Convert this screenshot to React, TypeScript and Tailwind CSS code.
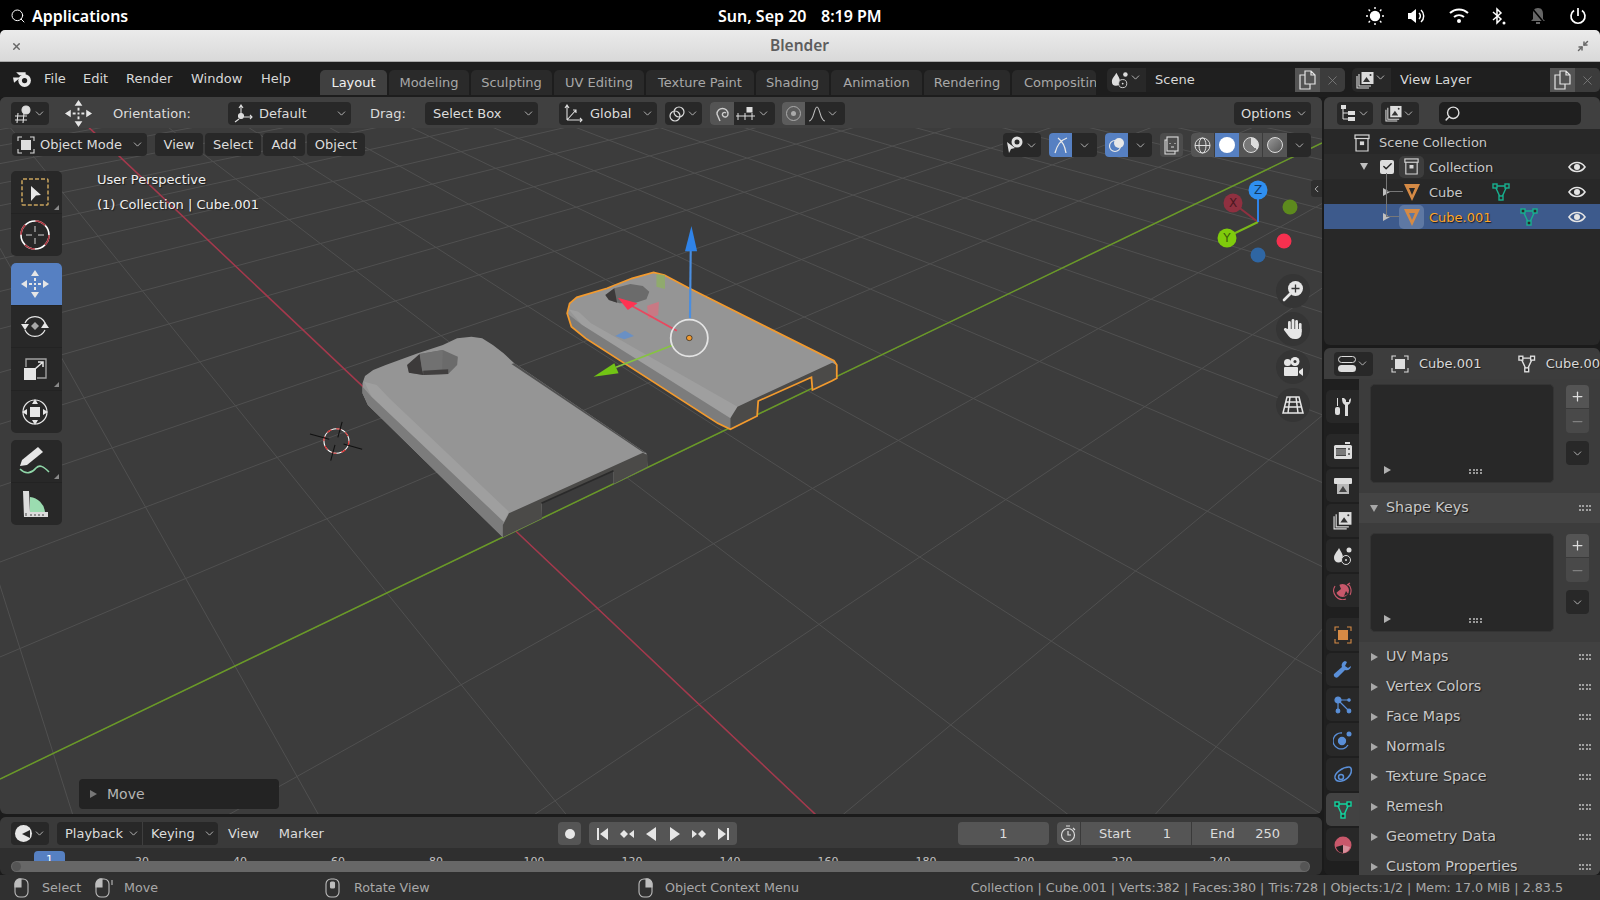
import React from "react";
import { Search, X, Minimize2, ChevronDown, ChevronLeft, Plus, Minus, Check } from "lucide-react";

const sans = "font-['DejaVu_Sans',sans-serif]";
const shadow = "[text-shadow:1px_1px_1px_#1c1c1c]";

// ground plane grid, two vanishing points
const O = [516, 531];
const A = [2096, -229];
const B = [-246, -189];
const a = 0.0755;
const b = 0.097;

function project(u: number, v: number) {
  const w = 1 + u * a + v * b;
  return [(O[0] + u * a * A[0] + v * b * B[0]) / w, (O[1] + u * a * A[1] + v * b * B[1]) / w];
}

function gridLines() {
  const out: string[] = [];
  for (let i = -9; i <= 14; i++) {
    const p1 = project((0.04 - 1 - i * b) / a, i);
    const p2 = project(90, i);
    out.push(`M${p1[0]} ${p1[1]}L${p2[0]} ${p2[1]}`);
    const q1 = project(i, (0.04 - 1 - i * a) / b);
    const q2 = project(i, 90);
    out.push(`M${q1[0]} ${q1[1]}L${q2[0]} ${q2[1]}`);
  }
  return out.join("");
}

const selected =
  "M748 310 L755 280 L775 262 L860 235 L930 205 L990 187 L1020 195 L1090 235 L1495 452 L1503 465 L1503 505 L1490 512 L1435 540 L1432 502 L1283 573 L1280 618 L1205 658 L1170 640 L800 385 L760 350 Z";

function Scene() {
  return (
    <svg className="absolute inset-0 h-full w-full" viewBox="0 97 1322 717" preserveAspectRatio="none">
      <path d={gridLines()} stroke="#505050" strokeWidth="1" fill="none" />
      <line x1="89" y1="127.6" x2="816" y2="815" stroke="#a5384c" strokeWidth="1.5" />
      <line x1="0" y1="779" x2="1322" y2="143" stroke="#6a9a27" strokeWidth="1.5" />
      <g transform="translate(300 210) scale(0.35714 0.33333)">
        {/* left object */}
        <path
          d="M175 520 L182 498 L205 480 L240 465 L330 430 L400 405 L440 385 L480 380 L510 385 L540 405 L570 430 L600 460 L970 730 L973 770 L878 822 L878 782 L676 880 L678 925 L568 982 L190 585 L175 550 Z"
          fill="#959595"
        />
        <path d="M180 515 L215 525 L250 565 L585 905 L570 935 L200 560 Z" fill="#9f9f9f" />
        <path d="M175 530 L200 560 L570 935 L568 982 L190 585 L175 550 Z" fill="#7c7c7c" />
        <path d="M600 460 L970 730 L960 727 L592 462 Z" fill="#505050" />
        <path d="M568 982 L568 945 L585 910 L960 728 L973 735 L973 770 L878 822 L878 782 L676 880 L678 925 Z" fill="#4b4a48" />
        <path d="M878 782 L676 880" stroke="#2a2a2a" strokeWidth="5" />
        <path d="M300 465 L335 432 L400 420 L442 440 L440 465 L415 492 L345 495 L305 488 Z" fill="#6b6b6b" />
        <path d="M300 465 L335 432 L345 495 L305 488 Z" fill="#3c3a3a" />
        <path d="M335 432 L400 420 L398 478 L342 482 Z" fill="#717171" />
        <path d="M345 482 L415 478 L415 492 L345 495 Z" fill="#413f3f" />
        {/* selected object */}
        <path d={selected} fill="#959595" />
        <path d="M752 298 L780 305 L815 340 L1225 590 L1205 625 L790 345 Z" fill="#9f9f9f" />
        <path d="M748 310 L790 345 L1205 625 L1205 658 L1170 640 L800 385 L760 350 Z" fill="#7c7c7c" />
        <path d="M1205 658 L1205 625 L1225 590 L1490 458 L1503 465 L1503 505 L1435 540 L1432 502 L1283 573 L1280 618 Z" fill="#4b4a48" />
        <path d="M855 255 L880 235 L925 222 L960 228 L978 245 L970 268 L940 278 L895 280 L865 270 Z" fill="#6b6b6b" />
        <path d="M855 255 L880 235 L888 278 L865 270 Z" fill="#3c3a3a" />
        <path d={selected} fill="none" stroke="#f29a2e" strokeWidth="5" />
        {/* move gizmo */}
        <path d="M998 192 L1022 195 L1022 237 L998 230 Z" fill="#8fb35c" fillOpacity="0.7" />
        <path d="M972 287 L1005 275 L1003 315 L975 327 Z" fill="#d9707f" fillOpacity="0.75" />
        <path d="M883 378 L910 362 L935 378 L908 388 Z" fill="#5f8ed0" fillOpacity="0.8" />
        <line x1="1092" y1="325" x2="1094" y2="120" stroke="#4a8ee0" strokeWidth="6" />
        <path d="M1096 48 L1078 124 L1112 124 Z" fill="#2f83e8" />
        <line x1="1055" y1="362" x2="925" y2="285" stroke="#e8485f" strokeWidth="5" />
        <path d="M890 263 L945 280 L918 300 Z" fill="#ff3352" />
        <line x1="1045" y1="405" x2="885" y2="472" stroke="#86c440" strokeWidth="5" />
        <path d="M822 500 L880 460 L892 490 Z" fill="#72c415" />
        <ellipse cx="1090" cy="384" rx="52" ry="55" fill="none" stroke="#e4e4e4" strokeWidth="5" />
        <ellipse cx="1090" cy="384" rx="8" ry="8" fill="#f29a2e" stroke="#222" strokeWidth="2" />
        {/* 3d cursor */}
        <g fill="none" strokeWidth="3">
          <ellipse cx="102" cy="693" rx="35" ry="37" stroke="#fff" />
          <ellipse cx="102" cy="693" rx="35" ry="37" stroke="#d22" strokeDasharray="14 14" />
          <path d="M28 672 L82 688 M122 702 L174 718 M118 636 L106 682 M98 705 L86 752" stroke="#111" />
        </g>
      </g>
    </svg>
  );
}

function Pill({ children, className = "" }: { children?: React.ReactNode; className?: string }) {
  return <div className={`flex items-center rounded-[4px] bg-[#282828] text-[#dcdcdc] ${className}`}>{children}</div>;
}

function Chev({ className = "" }: { className?: string }) {
  return <ChevronDown size={13} strokeWidth={1.5} className={`shrink-0 text-[#cfcfcf] ${className}`} />;
}

function MoveIcon({ size = 30 }: { size?: number }) {
  return (
    <svg width={size} height={size} viewBox="0 0 30 30" fill="#e6e6e6">
      <path d="M15 1 L19 7 L11 7 Z M15 29 L11 23 L19 23 Z M1 15 L7 11 L7 19 Z M29 15 L23 19 L23 11 Z" />
      <rect x="14" y="9" width="2" height="3" />
      <rect x="14" y="18" width="2" height="3" />
      <rect x="9" y="14" width="3" height="2" />
      <rect x="18" y="14" width="3" height="2" />
      <rect x="14" y="14" width="2" height="2" />
    </svg>
  );
}

function Mesh({ color, size = 20 }: { color: string; size?: number }) {
  return (
    <svg width={size} height={size} viewBox="0 0 20 20" fill="none" stroke={color} strokeWidth="1.4">
      <path d="M4 4 L16 4 L10 17 Z" />
      <rect x="2" y="2" width="4" height="4" fill="#2b2b2b" />
      <rect x="14" y="2" width="4" height="4" fill="#2b2b2b" />
      <rect x="8" y="14" width="4" height="4" fill="#2b2b2b" />
    </svg>
  );
}

function Orange() {
  return (
    <svg width="18" height="20" viewBox="0 0 18 20" fill="none">
      <path d="M1 2 H17 L9 19 Z M6 6 L9 13 L12 6 Z" fill="#d58a45" fillRule="evenodd" />
    </svg>
  );
}

function EyeIcon() {
  return (
    <svg width="18" height="14" viewBox="0 0 18 14" fill="none">
      <path d="M1 7 C5 1 13 1 17 7 C13 13 5 13 1 7 Z" stroke="#e4e4e4" strokeWidth="1.6" />
      <circle cx="9" cy="7" r="3" fill="#e4e4e4" />
    </svg>
  );
}

function CollectionIcon({ size = 18 }: { size?: number }) {
  return (
    <svg width={size} height={size} viewBox="0 0 18 18" fill="none" stroke="#d8d8d8" strokeWidth="1.2">
      <rect x="2" y="1" width="14" height="3.5" />
      <path d="M3 4.5 V17 H15 V4.5" />
      <rect x="7.5" y="8" width="3" height="2.5" fill="#d8d8d8" />
    </svg>
  );
}

function ImagesIcon({ size = 18 }: { size?: number }) {
  return (
    <svg width={size} height={size} viewBox="0 0 18 18" fill="none" stroke="#dcdcdc" strokeWidth="1.1">
      <path d="M1 5 V17 H13 M3 3 V15 H15" />
      <rect x="5.5" y="1" width="12" height="12" fill="#dcdcdc" stroke="none" />
      <path d="M7 11 L10.5 6 L14 11 Z" fill="#333" stroke="none" />
      <circle cx="14.5" cy="4" r="1" fill="#333" stroke="none" />
    </svg>
  );
}

function SceneIcon({ size = 20 }: { size?: number }) {
  return (
    <svg width={size} height={size} viewBox="0 0 20 20" fill="#ddd">
      <path d="M6 2 C8 6 10 8 10 12 A4.5 4.5 0 0 1 1 12 C1 8 4 6 6 2 Z" />
      <circle cx="16" cy="4" r="2.5" />
      <circle cx="13" cy="14" r="4.5" fill="#282828" stroke="#ddd" />
      <circle cx="13" cy="14" r="1" />
    </svg>
  );
}

function CopyDoc() {
  return (
    <svg width="17" height="20" viewBox="0 0 17 20" fill="none" stroke="#e4e4e4" strokeWidth="1.2">
      <path d="M6 1 H12 L16 5 V14 H6 Z M12 1 V5 H16" />
      <path d="M6 5 H1 V19 H11 V14" />
    </svg>
  );
}

function ObjectIcon({ color = "#ddd" }: { color?: string }) {
  return (
    <svg width="18" height="18" viewBox="0 0 18 18" fill="none" stroke={color} strokeWidth="1.1">
      <path d="M1 5 V1 H5 M13 1 H17 V5 M17 13 V17 H13 M5 17 H1 V13" />
      <rect x="4" y="4" width="10" height="10" fill={color} stroke="none" />
    </svg>
  );
}

function Tool({ active, children, corner }: { active?: boolean; children: React.ReactNode; corner?: boolean }) {
  return (
    <div className={`relative flex h-[42.5px] w-[51px] items-center justify-center border-b border-[#232323] pr-[3px] last:border-b-0 ${active ? "bg-[#5680c2]" : ""}`}>
      {children}
      {corner && <div className="absolute bottom-[3px] right-[3px] h-0 w-0 border-b-[5px] border-l-[5px] border-b-[#8a8a8a] border-l-transparent" />}
    </div>
  );
}

function Toolbar() {
  return (
    <div className="absolute left-[11px] top-[74px] flex flex-col gap-[7px]">
      <div className="overflow-hidden rounded-[5px] bg-[#282828]">
        <Tool corner>
          <svg width="30" height="30" viewBox="0 0 30 30">
            <rect x="2" y="2" width="26" height="26" rx="1" fill="none" stroke="#c9a45e" strokeWidth="1.5" strokeDasharray="4 2" />
            <path d="M11 9 L21 18 L16 18.5 L11 24 Z" fill="#e6e6e6" />
          </svg>
        </Tool>
        <Tool>
          <svg width="32" height="32" viewBox="0 0 32 32" fill="none">
            <circle cx="16" cy="16" r="14" stroke="#fff" strokeWidth="1.6" />
            <circle cx="16" cy="16" r="14" stroke="#a8323c" strokeWidth="1.6" strokeDasharray="11 11" />
            <path d="M16 7 V13 M16 19 V25 M7 16 H13 M19 16 H25" stroke="#999" strokeWidth="1.5" />
          </svg>
        </Tool>
      </div>
      <div className="overflow-hidden rounded-[5px] bg-[#282828]">
        <Tool active>
          <MoveIcon />
        </Tool>
        <Tool>
          <svg width="30" height="30" viewBox="0 0 30 30" fill="none">
            <path d="M5 12 A11 11 0 0 1 25 12 M25 19 A11 11 0 0 1 5 19" stroke="#e6e6e6" strokeWidth="1.2" />
            <path d="M15 11 L19 15 L15 19 L11 15 Z" fill="#a8a8a8" />
            <path d="M1 13 H9 L5 19 Z M21 17 H29 L25 11 Z" fill="#e6e6e6" />
          </svg>
        </Tool>
        <Tool corner>
          <svg width="26" height="26" viewBox="0 0 26 26" fill="none">
            <path d="M4 11 V3 H24 V22 H15" stroke="#a0a0a0" strokeWidth="1.4" />
            <rect x="2" y="12" width="12" height="12" fill="#e6e6e6" />
            <path d="M13 13 L21 6 M16 6 H21 V11" stroke="#e6e6e6" strokeWidth="1.5" />
          </svg>
        </Tool>
        <Tool>
          <svg width="30" height="30" viewBox="0 0 30 30" fill="none">
            <circle cx="15" cy="15" r="12" stroke="#e6e6e6" strokeWidth="1.2" />
            <rect x="10" y="10" width="10" height="10" fill="#e6e6e6" />
            <path d="M15 2 L18 7 H12 Z M15 28 L12 23 H18 Z M2 15 L7 12 V18 Z M28 15 L23 18 V12 Z" fill="#e6e6e6" />
          </svg>
        </Tool>
      </div>
      <div className="overflow-hidden rounded-[5px] bg-[#282828]">
        <Tool corner>
          <svg width="34" height="30" viewBox="0 0 34 30" fill="none">
            <path d="M2 20 L4 14 L20 1 L25 6 L9 19 Z" fill="#e6e6e6" />
            <path d="M2 23 C8 29 14 27 18 22 C22 18 26 21 31 26" stroke="#8fd6a8" strokeWidth="1.6" />
          </svg>
        </Tool>
        <Tool>
          <svg width="30" height="30" viewBox="0 0 30 30" fill="none">
            <path d="M4 28 L3 2 L9 2 L10 23 L28 23 L28 28 Z" fill="#dcdcdc" />
            <path d="M10 8 A 17 17 0 0 1 25 23 L10 23 Z" fill="#9bdcb0" />
            <path d="M6 24 L6 27 M11 25 V27 M15 25 V27 M19 25 V27 M23 25 V27" stroke="#444" />
          </svg>
        </Tool>
      </div>
    </div>
  );
}

function ViewportIcons() {
  return (
    <div className="absolute right-[11px] top-[36px] flex h-[24px] items-center gap-[8px]">
      <Pill className="h-[24px] w-[38px] justify-center">
        <svg width="19" height="18" viewBox="0 0 19 18" fill="#e0e0e0">
          <circle cx="11" cy="6" r="5.5" />
          <circle cx="11" cy="6" r="2.5" fill="#282828" />
          <path d="M1 6 L9 12 L5 13 L3 17 Z" />
        </svg>
        <Chev />
      </Pill>
      <Pill className="h-[24px] w-[48px]">
        <div className="flex h-full w-[23px] items-center justify-center rounded-l-[4px] bg-[#5680c2]">
          <svg width="16" height="18" viewBox="0 0 16 18" fill="none" stroke="#e8e8e8" strokeWidth="1.3">
            <path d="M2 17 C4 9 8 4 14 2 M5 2 C9 5 12 10 13 17" />
          </svg>
        </div>
        <div className="flex w-[25px] justify-center"><Chev /></div>
      </Pill>
      <Pill className="h-[24px] w-[47px]">
        <div className="flex h-full w-[23px] items-center justify-center rounded-l-[4px] bg-[#5680c2]">
          <svg width="18" height="18" viewBox="0 0 18 18">
            <circle cx="7" cy="10" r="5.5" fill="none" stroke="#e8e8e8" strokeWidth="1.2" />
            <circle cx="11" cy="7" r="5" fill="#e8e8e8" />
          </svg>
        </div>
        <div className="flex w-[24px] justify-center"><Chev /></div>
      </Pill>
      <div className="flex h-[24px] w-[23px] items-center justify-center rounded-[4px] bg-[#4c4c4c]">
        <svg width="15" height="19" viewBox="0 0 15 19" fill="none" stroke="#dcdcdc" strokeWidth="1.1">
          <rect x="3" y="1" width="11" height="14" />
          <path d="M3 4 H1 V18 H11 V15" />
          <path d="M6 7 V8 M11 7 V8 M7 11 H10" />
        </svg>
      </div>
      <Pill className="h-[24px] w-[120px] overflow-hidden">
        <div className="flex h-full w-[24px] items-center justify-center border-r border-[#3c3c3c] bg-[#545454]">
          <svg width="17" height="17" viewBox="0 0 17 17" fill="none" stroke="#dcdcdc" strokeWidth="1">
            <circle cx="8.5" cy="8.5" r="7.5" />
            <ellipse cx="8.5" cy="8.5" rx="3.5" ry="7.5" />
            <path d="M1 8.5 H16" />
          </svg>
        </div>
        <div className="flex h-full w-[24px] items-center justify-center bg-[#5680c2]">
          <div className="h-[16px] w-[16px] rounded-full bg-white" />
        </div>
        <div className="flex h-full w-[24px] items-center justify-center border-r border-[#3c3c3c] bg-[#545454]">
          <div className="h-[16px] w-[16px] rounded-full border border-[#ddd] bg-[conic-gradient(#dcdcdc_0_35%,#777_35%_100%)]" />
        </div>
        <div className="flex h-full w-[24px] items-center justify-center bg-[#545454]">
          <div className="h-[16px] w-[16px] rounded-full border border-[#ddd] bg-gradient-to-br from-[#999] to-[#555]" />
        </div>
        <div className="flex w-[24px] justify-center"><Chev /></div>
      </Pill>
    </div>
  );
}

function Gizmo() {
  return (
    <svg className="absolute left-[1212px] top-[79px]" width="90" height="95" viewBox="0 0 90 95">
      <line x1="46" y1="46" x2="21" y2="27" stroke="#8f3040" strokeWidth="2" />
      <line x1="46" y1="46" x2="15" y2="61" stroke="#7ab81a" strokeWidth="2" />
      <line x1="46" y1="46" x2="46" y2="14" stroke="#2f83e8" strokeWidth="2" />
      <circle cx="21" cy="27" r="9.5" fill="#8f3040" />
      <text x="21" y="31" textAnchor="middle" fontSize="12" fill="#4a1820" fontFamily="DejaVu Sans">X</text>
      <circle cx="46" cy="14" r="9.5" fill="#2f8ff0" />
      <text x="46" y="18" textAnchor="middle" fontSize="12" fill="#123a66" fontFamily="DejaVu Sans">Z</text>
      <circle cx="15" cy="62" r="9.5" fill="#7fcb0c" />
      <text x="15" y="66" textAnchor="middle" fontSize="12" fill="#3a5c08" fontFamily="DejaVu Sans">Y</text>
      <circle cx="78" cy="31" r="7.5" fill="#5d8a1d" />
      <circle cx="72" cy="65" r="7.5" fill="#f6304f" />
      <circle cx="46" cy="79" r="7.5" fill="#2f66a3" />
    </svg>
  );
}

function NavButton({ children }: { children: React.ReactNode }) {
  return <div className="flex h-[34px] w-[34px] items-center justify-center rounded-full bg-[#353535]">{children}</div>;
}

function Header() {
  return (
    <div className="flex h-[31px] items-center bg-[#404040] pl-[11px] pt-[2px] text-[13px] text-[#dcdcdc]">
      <Pill className="h-[23px] w-[38px] justify-center gap-[1px]">
        <svg width="18" height="18" viewBox="0 0 18 18" fill="none" stroke="#ddd" strokeWidth="1.1">
          <path d="M1 11 H13 M1 15 H13 M4 8 L3 18 M10 8 L9 18" />
          <circle cx="12" cy="5" r="4" fill="#ddd" />
        </svg>
        <Chev />
      </Pill>
      <div className="ml-[15px] w-[29px]"><MoveIcon size={29} /></div>
      <span className="ml-[20px] w-[75px]">Orientation:</span>
      <Pill className="ml-[40px] h-[23px] w-[123px] pl-[5px] pr-[3px]">
        <svg width="20" height="19" viewBox="0 0 20 19" fill="none" stroke="#ddd" strokeWidth="1.1">
          <path d="M8 10 V2 M6 4 L8 1 L10 4 M11 13 H19 M17 11 L19 13 L17 15 M6 15 L2 18" />
          <circle cx="8" cy="12" r="2.5" fill="#ddd" />
        </svg>
        <span className="ml-[6px] flex-1">Default</span>
        <Chev />
      </Pill>
      <span className="ml-[19px] w-[34px]">Drag:</span>
      <Pill className="ml-[21px] h-[23px] w-[113px] pl-[8px] pr-[3px]">
        <span className="flex-1">Select Box</span>
        <Chev />
      </Pill>
      <Pill className="ml-[21px] h-[23px] w-[98px] pl-[5px] pr-[3px]">
        <svg width="20" height="19" viewBox="0 0 20 19" fill="none" stroke="#ddd" strokeWidth="1.1">
          <path d="M3 16 V2 M1 4 L3 1 L5 4 M3 16 H18 M16 14 L18 16 L16 18 M3 16 L12 6 M9 6 H12 V9" />
        </svg>
        <span className="ml-[6px] flex-1">Global</span>
        <Chev />
      </Pill>
      <Pill className="ml-[8px] h-[23px] w-[37px] justify-center">
        <svg width="18" height="18" viewBox="0 0 18 18" fill="none" stroke="#ddd" strokeWidth="1.2">
          <circle cx="11" cy="7" r="5" />
          <circle cx="7" cy="11" r="5" />
        </svg>
        <Chev />
      </Pill>
      <Pill className="ml-[8px] h-[23px] w-[65px] overflow-hidden">
        <div className="flex h-full w-[24px] shrink-0 items-center justify-center bg-[#545454]">
          <svg width="15" height="18" viewBox="0 0 15 18" fill="none" stroke="#ccc" strokeWidth="1.4">
            <path d="M5 16 L2 9 a5.5 5.5 0 0 1 11 0 C13 12 10 13 8 11 a2 2 0 1 1 3 -3" />
          </svg>
        </div>
        <svg className="mx-[1px] shrink-0" width="21" height="14" viewBox="0 0 21 14" fill="none" stroke="#ddd">
          <path d="M1 9 H20 M3 6 V13 M10 6 V13 M17 6 V13" />
          <rect x="12" y="0" width="5" height="5" fill="#ddd" />
        </svg>
        <Chev />
      </Pill>
      <Pill className="ml-[7px] h-[23px] w-[63px] overflow-hidden bg-[#4b4b4b]">
        <div className="flex h-full w-[23px] shrink-0 items-center justify-center bg-[#5c5c5c]">
          <div className="flex h-[15px] w-[15px] items-center justify-center rounded-full border border-[#aaa]">
            <div className="h-[5px] w-[5px] rounded-full bg-[#aaa]" />
          </div>
        </div>
        <svg className="ml-[3px] shrink-0" width="18" height="16" viewBox="0 0 18 16" fill="none" stroke="#bbb" strokeWidth="1.1">
          <path d="M1 15 C6 15 6 1 9 1 C12 1 12 15 17 15" />
        </svg>
        <Chev className="text-[#a8a8a8]" />
      </Pill>
      <Pill className="ml-auto mr-[11px] h-[23px] w-[77px] pl-[7px] pr-[3px]">
        <span className="flex-1">Options</span>
        <Chev />
      </Pill>
    </div>
  );
}

function ModeBar() {
  return (
    <div className="absolute left-[12px] top-[36px] flex h-[23px] items-center gap-[2px] text-[13px] text-[#dcdcdc]">
      <Pill className="h-[23px] w-[135px] pl-[5px] pr-[3px]">
        <ObjectIcon />
        <span className="ml-[5px] flex-1">Object Mode</span>
        <Chev />
      </Pill>
      <Pill className="ml-[6px] h-[23px] w-[48px] justify-center">View</Pill>
      <Pill className="h-[23px] w-[56px] justify-center">Select</Pill>
      <Pill className="h-[23px] w-[42px] justify-center">Add</Pill>
      <Pill className="h-[23px] w-[58px] justify-center">Object</Pill>
    </div>
  );
}

function Viewport() {
  return (
    <div className={`relative flex-1 overflow-hidden rounded-[6px] bg-[#3c3c3c] ${sans}`}>
      <Scene />
      <div className="relative"><Header /></div>
      <ModeBar />
      <ViewportIcons />
      <Toolbar />
      <div className={`absolute left-[97px] top-[70px] text-[13px] leading-[25px] text-[#f0f0f0] ${shadow}`}>
        <div>User Perspective</div>
        <div>(1) Collection | Cube.001</div>
      </div>
      <Gizmo />
      <div className="absolute right-0 top-[83px] flex h-[17px] w-[11px] items-center justify-center rounded-l-[3px] bg-[#2f2f2f]">
        <ChevronLeft size={12} className="text-[#bbb]" />
      </div>
      <div className="absolute left-[1276px] top-[177px] flex flex-col gap-[4px]">
        <NavButton>
          <svg width="22" height="22" viewBox="0 0 22 22" fill="none">
            <circle cx="13.5" cy="8.5" r="7.5" fill="#e6e6e6" />
            <path d="M13.5 4.5 V12.5 M9.5 8.5 H17.5" stroke="#353535" strokeWidth="1.3" />
            <path d="M8 14 L2 20" stroke="#e6e6e6" strokeWidth="2.6" strokeLinecap="round" />
          </svg>
        </NavButton>
        <NavButton>
          <svg width="22" height="22" viewBox="0 0 22 22" fill="#e6e6e6">
            <rect x="6" y="3" width="2.8" height="11" rx="1.4" />
            <rect x="9.6" y="1" width="2.8" height="12" rx="1.4" />
            <rect x="13.2" y="2" width="2.8" height="12" rx="1.4" />
            <rect x="16.8" y="5" width="2.8" height="10" rx="1.4" />
            <path d="M6 11 H19.6 V15 C19.6 19 17 21 13 21 C9 21 7 19 5 16 L2 12 C1.5 10.5 3 9.5 4.5 10.5 Z" />
          </svg>
        </NavButton>
        <NavButton>
          <svg width="22" height="20" viewBox="0 0 22 20" fill="#e6e6e6">
            <circle cx="5.5" cy="5.5" r="3.5" />
            <circle cx="13" cy="4.5" r="4.5" />
            <circle cx="13" cy="4.5" r="1.5" fill="#353535" />
            <rect x="2" y="10" width="14" height="9" rx="1" />
            <path d="M17 14 L21 11 V19 L17 16 Z" />
          </svg>
        </NavButton>
        <NavButton>
          <svg width="22" height="20" viewBox="0 0 22 20" fill="none" stroke="#e6e6e6" strokeWidth="1.5">
            <path d="M5 2 H17 L21 18 H1 Z M8 2 L6 18 M14 2 L16 18 M3.5 7 H18.5 M2 12 H20" />
          </svg>
        </NavButton>
      </div>
      <div className="absolute bottom-[5px] left-[79px] flex h-[30px] w-[200px] items-center rounded-[4px] bg-[#232323] pl-[11px] text-[14px] text-[#b4b4b4]">
        <span className="mr-[10px] h-0 w-0 border-y-[4px] border-l-[7px] border-y-transparent border-l-[#777]" />Move
      </div>
    </div>
  );
}

function TimelineBar() {
  const ticks = ["20", "40", "60", "80", "100", "120", "140", "160", "180", "200", "220", "240"];
  return (
    <div className={`flex h-[58px] flex-col overflow-hidden rounded-[6px] bg-[#2f2f2f] ${sans}`}>
      <div className="flex h-[31px] shrink-0 items-center bg-[#3a3a3a] pl-[11px] pt-[2px] text-[13px] text-[#dcdcdc]">
        <div className="flex w-[547px] items-center">
          <Pill className="h-[23px] w-[38px] justify-center gap-[1px]">
            <div className="flex h-[17px] w-[17px] items-center justify-center rounded-full bg-[#e6e6e6]">
              <div className="ml-[6px] h-0 w-0 border-y-[4px] border-r-[8px] border-y-transparent border-r-[#282828]" />
            </div>
            <Chev />
          </Pill>
          <Pill className="ml-[8px] h-[23px] w-[86px] rounded-r-none border-r border-[#3f3f3f] pl-[8px] pr-[2px]">
            <span className="flex-1">Playback</span><Chev />
          </Pill>
          <Pill className="h-[23px] w-[75px] rounded-l-none pl-[8px] pr-[2px]">
            <span className="flex-1">Keying</span><Chev />
          </Pill>
          <span className="ml-[10px]">View</span>
          <span className="ml-[20px]">Marker</span>
        </div>
        <div className="flex h-[23px] w-[23px] items-center justify-center rounded-[4px] bg-[#555]">
          <div className="h-[10px] w-[10px] rounded-full bg-[#e6e6e6]" />
        </div>
        <div className="ml-[8px] flex h-[23px] w-[148px] items-center justify-around rounded-[4px] bg-[#555] px-[2px]">
          {["M2 2H4V14H2ZM13 2V14L5 8Z", "M1 8L5 4L9 8L5 12ZM10 8L15 4V12Z", "M13 1V15L3 8Z", "M3 1V15L13 8Z", "M1 4L6 8L1 12ZM11 4L15 8L11 12L7 8Z", "M12 2H14V14H12ZM3 2V14L11 8Z"].map((d) => (
            <svg key={d} width="16" height="16" viewBox="0 0 16 16" fill="#e6e6e6"><path d={d} /></svg>
          ))}
        </div>
        <div className="ml-[221px] flex h-[23px] w-[91px] items-center justify-center rounded-[4px] bg-[#555]">1</div>
        <div className="ml-[8px] flex h-[23px] w-[24px] items-center justify-center rounded-l-[4px] border-r border-[#3a3a3a] bg-[#555]">
          <svg width="17" height="18" viewBox="0 0 17 18" fill="none" stroke="#ddd" strokeWidth="1.2">
            <circle cx="8" cy="10" r="6.5" />
            <path d="M8 6 V10 H11 M6 1 H10 M13 3 L15 5" />
          </svg>
        </div>
        <div className="flex h-[23px] w-[111px] items-center justify-between border-r border-[#3a3a3a] bg-[#555] pl-[18px] pr-[20px]">
          <span>Start</span><span>1</span>
        </div>
        <div className="flex h-[23px] w-[106px] items-center justify-between rounded-r-[4px] bg-[#555] pl-[18px] pr-[18px]">
          <span>End</span><span>250</span>
        </div>
      </div>
      <div className="relative flex-1">
        <div className="absolute left-[34px] top-[3px] flex h-[12px] w-[31px] justify-center rounded-t-[4px] bg-[#5680c2] text-[11px] leading-[18px] text-white">1</div>
        <div className="absolute left-[93px] top-[6px] flex text-[11px] text-[#c0c0c0]">
          {ticks.map((t) => <span key={t} className="w-[98px] text-center">{t}</span>)}
        </div>
        <div className="absolute left-[11px] top-[13px] flex h-[11px] w-[1299px] items-center justify-between rounded-full bg-[#676767] px-[1px]">
          <div className="h-[9px] w-[9px] rounded-full bg-[#555]" />
          <div className="h-[9px] w-[9px] rounded-full bg-[#555]" />
        </div>
      </div>
    </div>
  );
}

function Outliner() {
  const eye = <span className="ml-auto"><EyeIcon /></span>;
  return (
    <div className={`relative flex h-[248px] flex-col overflow-hidden rounded-[6px] bg-[#282828] text-[13px] text-[#c8c8c8] ${sans} ${shadow}`}>
      <div className="flex h-[32px] shrink-0 items-center bg-[#404040] pl-[13px]">
        <Pill className="h-[23px] w-[36px] justify-center">
          <svg width="17" height="18" viewBox="0 0 17 18" fill="#ddd">
            <rect x="1" y="1" width="5" height="4" />
            <rect x="8" y="7" width="7" height="4" />
            <rect x="8" y="13" width="7" height="4" />
            <path d="M3 5 V15 H8 M3 9 H8" stroke="#ddd" fill="none" />
          </svg>
          <Chev />
        </Pill>
        <Pill className="ml-[8px] h-[23px] w-[38px] justify-center"><ImagesIcon size={17} /><Chev /></Pill>
        <div className="ml-[20px] flex h-[23px] w-[142px] items-center rounded-[5px] bg-[#1f1f1f] pl-[5px]">
          <Search size={17} className="-scale-x-100 text-[#ddd]" />
        </div>
      </div>
      <div className="flex h-[25px] shrink-0 items-center pl-[29px] pt-[2px]">
        <CollectionIcon size={18} />
        <span className="ml-[8px] pt-[1px]">Scene Collection</span>
      </div>
      <div className="flex h-[25px] shrink-0 items-center bg-[#2c2c2c] pl-[36px] pr-[14px]">
        <span className="mr-[12px] h-0 w-0 border-x-[4px] border-t-[7px] border-x-transparent border-t-[#c0c0c0]" />
        <div className="flex h-[14px] w-[14px] items-center justify-center rounded-[2px] bg-[#ddd]"><Check size={11} strokeWidth={3} className="text-[#222]" /></div>
        <div className="ml-[5px] flex h-[22px] w-[25px] items-center justify-center rounded-[5px] bg-[#3d3d3d]"><CollectionIcon size={17} /></div>
        <span className="ml-[5px] pt-[3px]">Collection</span>{eye}
      </div>
      <div className="flex h-[25px] shrink-0 items-center pl-[59px] pr-[14px]">
        <span className="mr-[13px] h-0 w-0 border-y-[4px] border-l-[7px] border-y-transparent border-l-[#c0c0c0]" />
        <Orange />
        <span className="ml-[8px] w-[62px] pt-[3px]">Cube</span>
        <Mesh color="#17b08f" />
        {eye}
      </div>
      <div className="flex h-[25px] shrink-0 items-center bg-[#3d5a8c] pl-[59px] pr-[14px]">
        <span className="mr-[9px] h-0 w-0 border-y-[4px] border-l-[7px] border-y-transparent border-l-[#c0c0c0]" />
        <div className="flex h-[24px] w-[25px] items-center justify-center rounded-[5px] bg-[#5e78a3]"><Orange /></div>
        <span className="ml-[5px] w-[90px] pt-[3px] text-[#ffa528]">Cube.001</span>
        <Mesh color="#17b08f" />
        {eye}
      </div>
      {/* hierarchy lines */}
      <div className="absolute left-[62px] top-[76px] h-[44px] w-px bg-[#777]" />
      <div className="absolute left-[62px] top-[94px] h-px w-[17px] bg-[#777]" />
      <div className="absolute left-[62px] top-[119px] h-px w-[13px] bg-[#777]" />
    </div>
  );
}

function Tab({ children, active, mt = 2 }: { children: React.ReactNode; active?: boolean; mt?: number }) {
  return (
    <div className={`flex h-[33px] w-[33px] shrink-0 items-center justify-center rounded-l-[5px] ${active ? "bg-[#424242]" : "bg-[#282828]"}`} style={{ marginTop: mt }}>
      {children}
    </div>
  );
}

function Dots({ color = "bg-[#a0a0a0]" }: { color?: string }) {
  return <div className="grid grid-cols-4 gap-[1.5px]">{Array.from({ length: 8 }).map((_, i) => <div key={i} className={`h-[2px] w-[2px] ${color}`} />)}</div>;
}

function PanelHeader({ label, open, bg = "" }: { label: string; open?: boolean; bg?: string }) {
  return (
    <div className={`flex h-[30px] items-center pl-[11px] pr-[9px] text-[#c8c8c8] ${bg}`}>
      {open ? (
        <span className="h-0 w-0 border-x-[4px] border-t-[7px] border-x-transparent border-t-[#a8a8a8]" />
      ) : (
        <span className="ml-[1px] h-0 w-0 border-y-[4px] border-l-[7px] border-y-transparent border-l-[#a8a8a8]" />
      )}
      <span className={`ml-[8px] flex-1 whitespace-nowrap text-[14.3px] ${shadow}`}>{label}</span>
      <Dots />
    </div>
  );
}

function ListBox({ first }: { first?: boolean }) {
  return (
    <div className={`flex gap-[12px] pb-[10px] pl-[11px] ${first ? "pt-[5px]" : "pt-[10px]"}`}>
      <div className="relative h-[99px] w-[184px] rounded-[5px] border border-[#343434] bg-[#282828]">
        <span className="absolute bottom-[8px] left-[13px] h-0 w-0 border-y-[4px] border-l-[7px] border-y-transparent border-l-[#b0b0b0]" />
        <div className="absolute bottom-[8px] left-[98px]"><Dots color="bg-[#999]" /></div>
      </div>
      <div className="flex flex-col pt-[1px]">
        <div className="flex h-[23px] w-[23px] items-center justify-center rounded-t-[4px] bg-[#545454]"><Plus size={15} className="text-[#ddd]" /></div>
        <div className="flex h-[25px] w-[23px] items-center justify-center rounded-b-[4px] border-t border-[#3a3a3a] bg-[#494949]"><Minus size={15} className="text-[#808080]" /></div>
        <div className="mt-[8px] flex h-[24px] w-[23px] items-center justify-center rounded-[4px] bg-[#282828]"><Chev /></div>
      </div>
    </div>
  );
}

function Properties() {
  const blue = "#5a8fd8";
  return (
    <div className={`flex min-h-0 flex-1 flex-col overflow-hidden rounded-[6px] bg-[#1f1f1f] ${sans}`}>
      <div className={`flex h-[31px] shrink-0 items-center overflow-hidden bg-[#3d3d3d] pl-[10px] text-[13px] text-[#d8d8d8] ${shadow}`}>
        <Pill className="h-[24px] w-[39px] shrink-0 justify-center">
          <div className="flex flex-col gap-[2px]">
            <div className="h-[7px] w-[18px] rounded-full border border-[#ddd]" />
            <div className="h-[7px] w-[18px] rounded-full bg-[#ddd]" />
          </div>
          <Chev />
        </Pill>
        <span className="ml-[18px]"><ObjectIcon /></span>
        <span className="ml-[10px] w-[101px] whitespace-nowrap">Cube.001</span>
        <Mesh color="#e0e0e0" />
        <span className="ml-[9px] whitespace-nowrap">Cube.00</span>
      </div>
      <div className="flex min-h-0 flex-1 overflow-hidden">
        <div className="flex w-[35px] shrink-0 flex-col items-end bg-[#1f1f1f] pt-[9px]">
          <Tab>
            <svg width="20" height="20" viewBox="0 0 20 20" fill="#ddd">
              <path d="M4 1 H5 V9 H4 Z" />
              <rect x="2" y="10" width="5" height="8" rx="2" />
              <path d="M9 1 C9 5 10 7 12 8 V19 H15 V8 C17 7 18 5 18 1 L16 3 V5 H13 V3 L11 1 Z" />
            </svg>
          </Tab>
          <Tab mt={11}>
            <svg width="20" height="20" viewBox="0 0 20 20">
              <rect x="1" y="4" width="18" height="14" rx="1.5" fill="#ddd" />
              <rect x="3" y="7" width="10" height="8" fill="#444" />
              <path d="M3 9 H13 M3 11 H13 M3 13 H13" stroke="#ddd" strokeWidth="0.7" />
              <path d="M12 1 H17 V3 H12 Z" fill="#ddd" />
              <circle cx="16" cy="8" r="1" fill="#444" />
              <circle cx="16" cy="13" r="1" fill="#444" />
            </svg>
          </Tab>
          <Tab>
            <svg width="20" height="20" viewBox="0 0 20 20">
              <rect x="1" y="2" width="18" height="6" rx="1" fill="#ddd" />
              <rect x="4" y="8" width="12" height="10" fill="#b8b8b8" />
              <path d="M6 16 L10 10 L14 16 Z" fill="#444" />
            </svg>
          </Tab>
          <Tab><ImagesIcon size={19} /></Tab>
          <Tab><SceneIcon /></Tab>
          <Tab>
            <svg width="19" height="19" viewBox="0 0 19 19" fill="#c9586b">
              <circle cx="9.5" cy="9.5" r="6.5" />
              <path d="M6 3 L1 9 L3 12 L8 8 Z M13 10 L11 15 L15 13 Z" fill="#282828" />
              <path d="M2 5 A9 9 0 0 0 13 18 M17 2 L14 4 M17 14 A9 9 0 0 0 15 3" stroke="#c9586b" strokeWidth="1.1" fill="none" />
            </svg>
          </Tab>
          <Tab mt={11}><ObjectIcon color="#d58a45" /></Tab>
          <Tab>
            <svg width="19" height="19" viewBox="0 0 19 19" fill={blue}>
              <path d="M12 1 C9 2 8 5 9 7 L1 14 C0 16 3 19 5 17 L12 10 C15 11 18 9 18 6 L15 8 L12 6 L14 2 Z" />
            </svg>
          </Tab>
          <Tab>
            <svg width="18" height="18" viewBox="0 0 18 18" fill={blue} stroke={blue} strokeWidth="1.2">
              <circle cx="4" cy="4" r="3" /><circle cx="4" cy="15" r="1.8" /><circle cx="15" cy="15" r="1.8" /><circle cx="15" cy="4" r="1.2" />
              <path d="M4 4 H15 M4 4 V15 M4 4 L15 15" />
            </svg>
          </Tab>
          <Tab>
            <svg width="20" height="20" viewBox="0 0 20 20" fill="none" stroke={blue} strokeWidth="1.3">
              <path d="M15 15 A8 8 0 1 1 9 3" />
              <circle cx="9" cy="11" r="3.5" fill={blue} />
              <circle cx="16" cy="4" r="2.5" fill={blue} stroke="none" />
            </svg>
          </Tab>
          <Tab>
            <svg width="20" height="20" viewBox="0 0 20 20" fill="none" stroke={blue} strokeWidth="1.5">
              <path d="M2 13 C1 8 10 2 16 2 C19 2 19 7 17 10 C13 16 4 19 2 13 Z" />
              <circle cx="8" cy="12" r="2.5" />
            </svg>
          </Tab>
          <Tab active><Mesh color="#12d6a0" /></Tab>
          <Tab>
            <svg width="18" height="18" viewBox="0 0 18 18">
              <circle cx="9" cy="9" r="8.5" fill="#c9586b" />
              <path d="M2 11 L9 9 L9 17 A8 8 0 0 1 2 11 Z" fill="#1f1f1f" />
              <path d="M9 9 L16 11 A8 8 0 0 1 9 17 Z" fill="#e8c6cc" opacity="0.5" />
            </svg>
          </Tab>
        </div>
        <div className="min-w-0 flex-1 overflow-hidden bg-[#3c3c3c]">
          <ListBox first />
          <PanelHeader label="Shape Keys" open bg="bg-[#444444]" />
          <ListBox />
          <div className="bg-[#414141]">
            {["UV Maps", "Vertex Colors", "Face Maps", "Normals", "Texture Space", "Remesh", "Geometry Data", "Custom Properties"].map((l) => (
              <PanelHeader key={l} label={l} />
            ))}
          </div>
        </div>
      </div>
    </div>
  );
}

function Mouse({ fill = "left", extra }: { fill?: string; extra?: boolean }) {
  return (
    <svg width={extra ? 18 : 15} height="20" viewBox={extra ? "0 0 18 20" : "0 0 15 20"} fill="none" stroke="#bdbdbd" strokeWidth="1.1">
      <rect x="1" y="1" width="13" height="18" rx="5" />
      {fill === "left" && <path d="M1 9 V6 A5 5 0 0 1 7 1 V9 Z" fill="#bdbdbd" />}
      {fill === "mid" && <rect x="5.5" y="4" width="4" height="6" rx="1" fill="#bdbdbd" />}
      {fill === "right" && <path d="M14 9 V6 A5 5 0 0 0 8 1 V9 Z" fill="#bdbdbd" />}
      {extra && <path d="M17 2 V7" />}
    </svg>
  );
}

function Status() {
  return (
    <div className={`flex h-[25px] shrink-0 items-center bg-[#303030] pl-[14px] pr-[37px] text-[12.7px] text-[#a8a8a8] ${sans}`}>
      <Mouse />
      <span className="ml-[13px] w-[53px]">Select</span>
      <Mouse extra />
      <span className="ml-[11px] w-[201px]">Move</span>
      <Mouse fill="mid" />
      <span className="ml-[14px] w-[284px]">Rotate View</span>
      <Mouse fill="right" />
      <span className="ml-[12px]">Object Context Menu</span>
      <span className="ml-auto whitespace-nowrap">Collection | Cube.001 | Verts:382 | Faces:380 | Tris:728 | Objects:1/2 | Mem: 17.0 MiB | 2.83.5</span>
    </div>
  );
}

function SystemIcons() {
  return (
    <div className="ml-auto flex items-center gap-[22px] pr-[13px]">
      <svg width="20" height="20" viewBox="0 0 20 20" fill="none" stroke="#fff" strokeWidth="1.4">
        <circle cx="10" cy="10" r="4.5" fill="#fff" />
        <path d="M10 1 V3 M10 17 V19 M1 10 H3 M17 10 H19 M3.6 3.6 L5 5 M15 15 L16.4 16.4 M3.6 16.4 L5 15 M15 5 L16.4 3.6" />
      </svg>
      <svg width="20" height="20" viewBox="0 0 20 20" fill="#fff">
        <path d="M1 7 H4 L9 3 V17 L4 13 H1 Z" />
        <path d="M12 7 A4 4 0 0 1 12 13 M14 4 A8 8 0 0 1 14 16" fill="none" stroke="#fff" strokeWidth="1.5" />
      </svg>
      <svg width="20" height="18" viewBox="0 0 20 18">
        <path d="M1 6 A13 13 0 0 1 19 6" fill="none" stroke="#fff" strokeWidth="2" />
        <path d="M5 10 A8 8 0 0 1 15 10" fill="none" stroke="#fff" strokeWidth="2" />
        <circle cx="10" cy="14" r="2" fill="#fff" />
      </svg>
      <svg width="16" height="20" viewBox="0 0 16 20" fill="none" stroke="#fff" strokeWidth="1.5">
        <path d="M2 6 L10 13 L6 17 V3 L10 7 L2 14" />
        <circle cx="13" cy="17" r="1.5" fill="#fff" stroke="none" />
      </svg>
      <svg width="18" height="20" viewBox="0 0 18 20" fill="#666">
        <path d="M9 2 C5 2 4 5 4 8 V13 L2 15 H16 L14 13 V8 C14 5 13 2 9 2 Z" />
        <rect x="7" y="16" width="4" height="2" />
        <path d="M2 1 L17 19" stroke="#000" strokeWidth="1.5" />
      </svg>
      <svg width="18" height="18" viewBox="0 0 18 18" fill="none" stroke="#fff" strokeWidth="1.7">
        <path d="M9 1 V9 M5 3.5 A7 7 0 1 0 13 3.5" />
      </svg>
    </div>
  );
}

const tabs: [string, number][] = [
  ["Modeling", 80],
  ["Sculpting", 81],
  ["UV Editing", 90],
  ["Texture Paint", 108],
  ["Shading", 73],
  ["Animation", 91],
  ["Rendering", 86],
];

export default function App() {
  return (
    <div className="flex h-[900px] w-[1600px] flex-col overflow-hidden bg-black font-['Noto_Sans',sans-serif]">
      <div className="flex h-[30px] shrink-0 items-center bg-black pt-[1px] text-[16px] font-semibold text-white">
        <Search size={16} className="ml-[10px]" strokeWidth={1.5} />
        <span className="ml-[6px] w-[686px]">Applications</span>
        <span className="w-[103px]">Sun, Sep 20</span>
        <span>8:19 PM</span>
        <SystemIcons />
      </div>
      <div className="flex h-[32px] shrink-0 items-center justify-between rounded-t-[5px] border-b border-[#a8a8a8] bg-gradient-to-b from-[#ebebeb] to-[#d9d9d9] px-[11px] pt-[1px]">
        <X size={11} strokeWidth={3} className="text-[#666]" />
        <span className="text-[15.5px] font-semibold text-[#5d5d5d]">Blender</span>
        <Minimize2 size={12} strokeWidth={3} className="text-[#666]" />
      </div>
      <div className={`flex h-[35px] shrink-0 bg-[#1d1d1d] text-[13px] text-[#d8d8d8] ${sans}`}>
        <div className="flex h-[33px] items-center">
          <svg className="ml-[13px] w-[20px]" width="20" height="18" viewBox="0 0 19 17">
            <circle cx="11" cy="10" r="6" fill="#e8e8e8" />
            <circle cx="11" cy="10" r="2.5" fill="#1d1d1d" />
            <path d="M0 7 H7 L1 12 Z M3 2 H12 V5 H6 Z" fill="#e8e8e8" />
          </svg>
          <span className="ml-[11px] w-[39px]">File</span>
          <span className="w-[43px]">Edit</span>
          <span className="w-[65px]">Render</span>
          <span className="w-[70px]">Window</span>
          <span className="w-[59px]">Help</span>
        </div>
        <div className="flex items-start gap-[2px] pt-[8px]">
          <div className="flex h-[25px] w-[67px] items-center justify-center rounded-t-[5px] bg-[#404040] text-[#f0f0f0]">Layout</div>
          {tabs.map(([t, w]) => (
            <div key={t} className="flex h-[25px] items-center justify-center rounded-t-[5px] bg-[#2a2a2a] text-[#a8a8a8]" style={{ width: w }}>{t}</div>
          ))}
          <div className="flex h-[25px] w-[84px] items-center overflow-hidden whitespace-nowrap rounded-t-[5px] bg-[#2a2a2a] pl-[12px] text-[#a8a8a8]">Compositing</div>
        </div>
        <div className="ml-[11px] mt-[6px] flex h-[24px] w-[238px] items-center overflow-hidden rounded-[5px] bg-[#282828]">
          <div className="flex w-[39px] justify-center"><SceneIcon size={18} /><Chev /></div>
          <div className="flex h-full flex-1 items-center bg-[#1f1f1f] pl-[9px]">Scene</div>
          <div className="flex h-full w-[25px] items-center justify-center bg-[#545454]"><CopyDoc /></div>
          <div className="flex h-full w-[25px] items-center justify-center bg-[#3c3c3c]"><X size={15} strokeWidth={1.3} className="text-[#808080]" /></div>
        </div>
        <div className="ml-[7px] mt-[6px] flex h-[24px] flex-1 items-center overflow-hidden rounded-[5px] bg-[#282828]">
          <div className="flex w-[39px] justify-center"><ImagesIcon size={18} /><Chev /></div>
          <div className="flex h-full flex-1 items-center bg-[#1f1f1f] pl-[9px]">View Layer</div>
          <div className="flex h-full w-[25px] items-center justify-center bg-[#545454]"><CopyDoc /></div>
          <div className="flex h-full w-[25px] items-center justify-center bg-[#3c3c3c]"><X size={15} strokeWidth={1.3} className="text-[#808080]" /></div>
        </div>
      </div>
      <div className="flex min-h-0 flex-1 gap-[2px] bg-[#1b1b1b]">
        <div className="flex w-[1322px] flex-col gap-[3px]">
          <Viewport />
          <TimelineBar />
        </div>
        <div className="flex min-w-0 flex-1 flex-col gap-[3px]">
          <Outliner />
          <Properties />
        </div>
      </div>
      <Status />
    </div>
  );
}
